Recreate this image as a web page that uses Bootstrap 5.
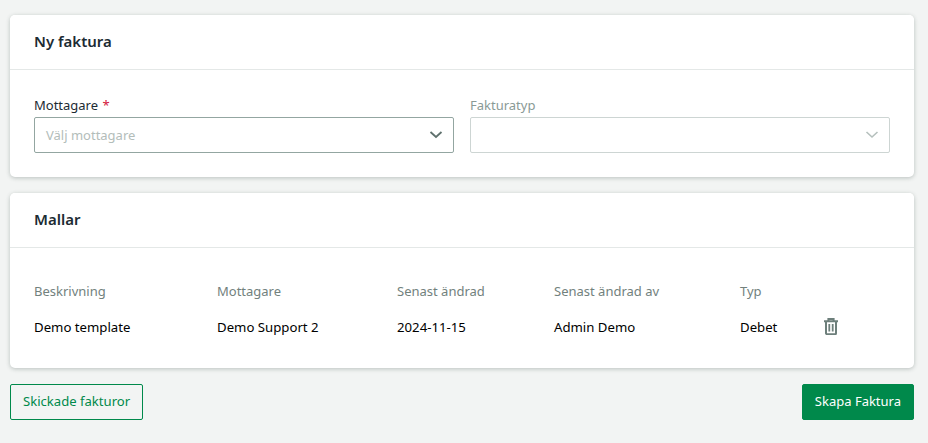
<!DOCTYPE html>
<html lang="sv">
<head>
<meta charset="utf-8">
<title>Ny faktura</title>
<link rel="stylesheet" href="https://cdn.jsdelivr.net/npm/bootstrap@5.3.0/dist/css/bootstrap.min.css">
<style>
html, body { height: 100%; overflow: hidden; }
body { background: #f2f4f3; font-family: "Noto Sans", "Open Sans", sans-serif; font-size: 13px; color: #000; }
.page-wrap { padding: 15px 14px 0 10px; display: flex; flex-direction: column; gap: 16px; }
.panel { border: 0; border-radius: 5px; box-shadow: 0 1px 4px rgba(40,60,55,.28); background: #fff; }
.panel .card-header { background: #fff; border-bottom: 1px solid #e4e8e7; padding: 0 24px 2px; height: 55px; display: flex; align-items: center; }
.panel-title { font-size: 15px; font-weight: 600; color: #1c2b33; margin: 0; }
.form-area { padding: 25px 24px 24px; display: grid; grid-template-columns: 1fr 1fr; column-gap: 16px; }
.fld-label { display: block; font-size: 13px; line-height: 20px; margin-bottom: 2px; color: #1c2b33; }
.fld-label.off { color: #8a9a96; }
.req { color: #d3143c; margin-left: 1px; }
.pick { height: 36px; border: 1px solid #93a6a1; border-radius: 2px; display: flex; align-items: center; justify-content: space-between; padding: 0 10px 0 11px; color: #b3bdba; background: #fff; }
.pick.off { border-color: #cdd5d3; }
.pick-text { padding-top: 2px; }
.tpl-area { padding: 29px 24px 19px; }
.tpl-table { table-layout: fixed; width: 856px; margin: 0; --bs-table-bg: transparent; font-size: 13px; }
.tpl-table th, .tpl-table td { border: 0; padding: 0; vertical-align: middle; }
.tpl-table th { font-weight: 400; color: #72817d; height: 30px; }
.tpl-table td { color: #000; height: 42px; font-size: 13.2px; }
.trash-ico { display: block; margin-bottom: 4px; }
.btn-out, .btn-main { font-size: 13px; height: 36px; border-radius: 2px; padding: 0 12px; display: inline-flex; align-items: center; }
.btn-out { color: #00894b; border: 1px solid #00894b; background: transparent; font-size: 13.1px; }
.btn-main { color: #fff; border: 1px solid #00894b; background: #00894b; }
</style>
</head>
<body>
<div class="page-wrap">
  <div class="card panel">
    <div class="card-header"><h2 class="panel-title">Ny faktura</h2></div>
    <div class="form-area">
      <div>
        <label class="fld-label">Mottagare <span class="req">*</span></label>
        <div class="pick"><span class="pick-text">Välj mottagare</span>
          <svg width="14" height="14" viewBox="0 0 14 14" fill="none" stroke="#5f716d" stroke-width="1.8"><path d="M1.5 4l5.5 5 5.5-5"/></svg>
        </div>
      </div>
      <div>
        <label class="fld-label off">Fakturatyp</label>
        <div class="pick off"><span></span>
          <svg width="14" height="14" viewBox="0 0 14 14" fill="none" stroke="#b5c0bd" stroke-width="1.6"><path d="M1.5 4l5.5 5 5.5-5"/></svg>
        </div>
      </div>
    </div>
  </div>
  <div class="card panel">
    <div class="card-header"><h2 class="panel-title">Mallar</h2></div>
    <div class="tpl-area">
      <table class="table tpl-table">
        <colgroup><col style="width:183px"><col style="width:180px"><col style="width:157px"><col style="width:186px"><col style="width:84px"><col></colgroup>
        <thead><tr><th>Beskrivning</th><th>Mottagare</th><th>Senast ändrad</th><th>Senast ändrad av</th><th>Typ</th><th></th></tr></thead>
        <tbody><tr><td>Demo template</td><td>Demo Support 2</td><td>2024-11-15</td><td>Admin Demo</td><td>Debet</td>
          <td><svg class="trash-ico" width="14" height="17" viewBox="0 0 14 17" fill="none" stroke="#6d7f7b" stroke-width="2"><path d="M0 3.2h14M4.4 3V1h5.2v2M2 3.2v12a1 1 0 0 0 1 1h8a1 1 0 0 0 1-1v-12"/><path d="M5.3 6v7.5M8.7 6v7.5" stroke-width="1.8"/></svg></td></tr></tbody>
      </table>
    </div>
  </div>
  <div class="d-flex justify-content-between">
    <button type="button" class="btn btn-out">Skickade fakturor</button>
    <button type="button" class="btn btn-main">Skapa Faktura</button>
  </div>
</div>
<script src="https://cdn.jsdelivr.net/npm/bootstrap@5.3.0/dist/js/bootstrap.bundle.min.js"></script>
</body>
</html>
